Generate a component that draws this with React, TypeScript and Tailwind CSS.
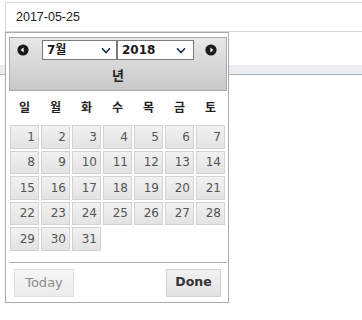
import React from "react";

const Chevron = () => (
  <svg width="10" height="7" viewBox="0 0 10 7" className="shrink-0">
    <path d="M1 1.2 L5 5.5 L9 1.2" fill="none" stroke="#1c2b4a" strokeWidth="1.6" />
  </svg>
);

const NavIcon = ({ dir }: { dir: "prev" | "next" }) => (
  <svg width="12" height="12" viewBox="0 0 12 12" className="shrink-0">
    <circle cx="6" cy="6" r="5.6" fill="#1b1b1b" />
    {dir === "prev" ? (
      <polygon points="3.6,6 6.6,3.4 6.6,8.6" fill="#ffffff" />
    ) : (
      <polygon points="8.4,6 5.4,3.4 5.4,8.6" fill="#ffffff" />
    )}
  </svg>
);

export default function App() {
  const days = Array.from({ length: 31 }, (_, i) => i + 1);
  const weekdays = ["일", "월", "화", "수", "목", "금", "토"];
  const cjk = { fontFamily: '"DejaVu Sans", "Noto Sans CJK KR", sans-serif' };
  return (
    <div className="relative h-[320px] w-[362px] overflow-hidden bg-white">
      {/* input */}
      <div
        className="ml-[5px] mt-[2px] flex h-[30px] w-[420px] items-center border border-[#d3d6dc] pl-[10px] text-[12.5px] text-[#222]"
        style={{ fontFamily: '"Liberation Sans", Arial, sans-serif' }}
      >
        2017-05-25
      </div>
      {/* band */}
      <div className="mt-[33px] h-[10px] w-full border-b border-[#a9b8b6] bg-[#eaedf2]" />

      {/* datepicker popup */}
      <div
        className="absolute left-[5px] top-[32px] h-[271px] w-[224px] border border-[#aaaaaa] bg-white pl-[3px] pr-[1px] pt-[4px]"
        style={cjk}
      >
        {/* header */}
        <div className="h-[54px] w-[218px] border border-[#aaaaaa] bg-linear-to-b from-[#e8e8e8] to-[#c8c8c8]">
          <div className="mt-[2px] flex h-[20px] items-center">
            <div className="ml-[7px]">
              <NavIcon dir="prev" />
            </div>
            <div className="ml-[13px] flex h-[20px] w-[75px] items-center justify-between border border-[#7a7a7a] bg-white pl-[4px] pr-[5px] text-[12px] font-bold text-[#1a1a1a]">
              <span>7월</span>
              <Chevron />
            </div>
            <div className="flex h-[20px] w-[77px] items-center justify-between border border-[#7a7a7a] bg-white pl-[4px] pr-[7px] text-[12px] font-bold text-[#1a1a1a]">
              <span>2018</span>
              <Chevron />
            </div>
            <div className="ml-[11px]">
              <NavIcon dir="next" />
            </div>
          </div>
          <div className="mt-[8px] text-center text-[13px] font-bold leading-[16px] text-[#222]">년</div>
        </div>

        {/* weekdays */}
        <div className="ml-[1px] grid h-[34px] grid-cols-[repeat(7,29px)] items-center gap-x-[2px]">
          {weekdays.map((w) => (
            <div key={w} className="text-center text-[12px] font-bold text-[#222]">
              {w}
            </div>
          ))}
        </div>

        {/* days */}
        <div className="ml-[1px] grid grid-cols-[repeat(7,29px)] auto-rows-[23.5px] gap-x-[2px] gap-y-[2px]">
          {days.map((d) => (
            <div
              key={d}
              className="flex items-center justify-end border border-[#d3d3d3] bg-linear-to-b from-[#f1f1f1] to-[#e3e3e3] pr-[3px] text-[12px] text-[#555555]"
            >
              {d}
            </div>
          ))}
        </div>

        {/* footer */}
        <div className="mt-[11px] w-[218px] border-t border-[#aaaaaa] pt-[6px]">
          <div className="flex items-center justify-between pl-[5px] pr-[6px]">
            <div className="flex h-[28px] w-[60px] items-center justify-center border border-[#e0e0e0] bg-linear-to-b from-[#f6f6f6] to-[#ececec] text-[13px] text-[#8c8c8c]">
              Today
            </div>
            <div className="flex h-[28px] w-[55px] items-center justify-center border border-[#d3d3d3] bg-linear-to-b from-[#f1f1f1] to-[#e3e3e3] text-[12.5px] font-bold text-[#333]">
              Done
            </div>
          </div>
        </div>
      </div>
    </div>
  );
}
